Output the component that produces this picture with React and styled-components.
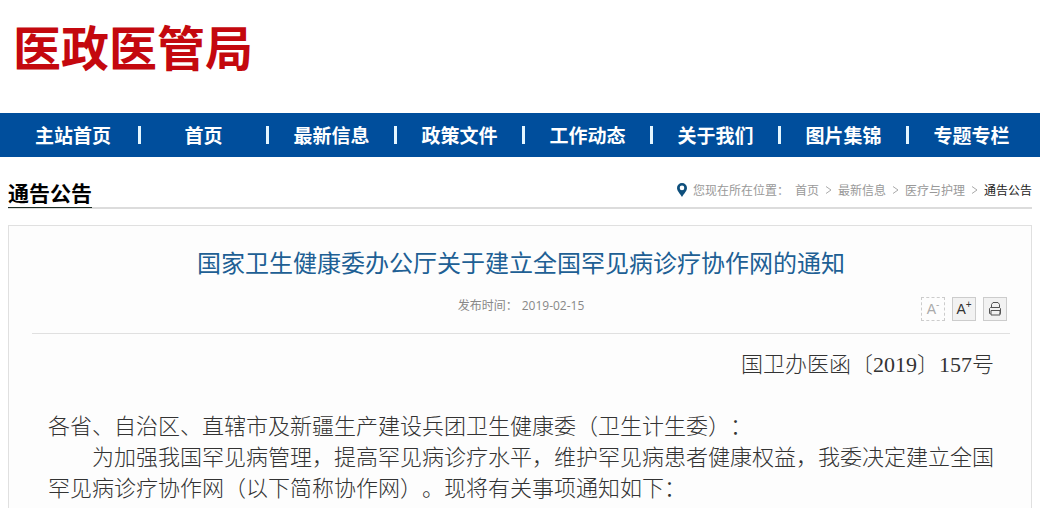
import React from "react";
import styled, { createGlobalStyle } from "styled-components";

const brandBlue = "#004e9c";

const navItems = ["主站首页", "首页", "最新信息", "政策文件", "工作动态", "关于我们", "图片集锦", "专题专栏"];
const crumbs = ["首页", "最新信息", "医疗与护理"];

function App() {
  return (
    <>
      <GlobalStyle />
      <Page lang="zh-CN">
        <Header>
          <Logo>医政医管局</Logo>
        </Header>
        <Navbar />
        <Container>
          <SectionBar>
            <SectionTitle>通告公告</SectionTitle>
            <Breadcrumbs />
          </SectionBar>
          <Article />
        </Container>
      </Page>
    </>
  );
}

export default App;

function Navbar() {
  return (
    <StyledNavbar>
      <NavList>
        {navItems.map((item) => (
          <NavItem key={item}>
            <NavLink href="#">{item}</NavLink>
          </NavItem>
        ))}
      </NavList>
    </StyledNavbar>
  );
}

function Breadcrumbs() {
  return (
    <StyledBreadcrumbs aria-label="位置">
      <PinIcon />
      <span>您现在所在位置：</span>
      {crumbs.map((crumb) => (
        <React.Fragment key={crumb}>
          <CrumbLink href="#">{crumb}</CrumbLink>
          <ChevronIcon />
        </React.Fragment>
      ))}
      <CurrentCrumb>通告公告</CurrentCrumb>
    </StyledBreadcrumbs>
  );
}

function Article() {
  return (
    <StyledArticle>
      <ArticleHead>
        <ArticleTitle>国家卫生健康委办公厅关于建立全国罕见病诊疗协作网的通知</ArticleTitle>
        <ArticleMeta>
          <PublishDate>
            <span>发布时间：</span>
            <time dateTime="2019-02-15">2019-02-15</time>
          </PublishDate>
          <Tools>
            <ToolButton aria-label="缩小字体" disabled>
              A<sup>-</sup>
            </ToolButton>
            <ToolButton aria-label="放大字体">
              A<sup>+</sup>
            </ToolButton>
            <ToolButton aria-label="打印">
              <PrintIcon />
            </ToolButton>
          </Tools>
        </ArticleMeta>
      </ArticleHead>
      <ArticleBody>
        <DocNumber>国卫办医函〔2019〕157号</DocNumber>
        <Paragraph>各省、自治区、直辖市及新疆生产建设兵团卫生健康委（卫生计生委）：</Paragraph>
        <Paragraph $indent>
          为加强我国罕见病管理，提高罕见病诊疗水平，维护罕见病患者健康权益，我委决定建立全国罕见病诊疗协作网（以下简称协作网）。现将有关事项通知如下：
        </Paragraph>
      </ArticleBody>
    </StyledArticle>
  );
}

function PinIcon() {
  return (
    <svg width="10" height="14" viewBox="0 0 10 14" aria-hidden="true">
      <path
        d="M5 0a5 5 0 0 0-5 5c0 3 3 5.500 5 9 2-3.500 5-6 5-9a5 5 0 0 0-5-5zm0 2.600a2.300 2.300 0 1 1 0 4.600 2.300 2.300 0 0 1 0-4.600z"
        fill="#0e4f7c"
        fillRule="evenodd"
      />
    </svg>
  );
}

function ChevronIcon() {
  return (
    <svg width="7" height="8" viewBox="0 0 7 8" fill="none" stroke="#aaa" aria-hidden="true">
      <path d="M1 .5 6 4 1 7.500" />
    </svg>
  );
}

function PrintIcon() {
  return (
    <svg width="14" height="14" viewBox="0 0 14 14" fill="none" stroke="#555" aria-hidden="true">
      <path d="M3.500 5.500v-3l1.500-2h5l1.500 2v3" />
      <path d="M2.500 11.500h-1v-5l1-1h9l1 1v5h-1" />
      <path d="M3 8.500h9v4.500h-9z" />
    </svg>
  );
}

const GlobalStyle = createGlobalStyle`
  * {
    box-sizing: border-box;
  }

  body {
    margin: 0;
    background: #fff;
    font-family: "Noto Sans CJK SC", sans-serif;
  }
`;

const Page = styled.div`
  min-height: 100vh;
  display: flex;
  flex-direction: column;
  text-spacing-trim: space-all;
`;

const Header = styled.header`
  padding: 14px 13px 35px;
`;

const Logo = styled.h1`
  margin: 0;
  color: #c4080e;
  font-size: 48px;
  line-height: 62px;
  font-weight: 700;
  padding-bottom: 2px;
`;

const StyledNavbar = styled.nav`
  background: ${brandBlue};
  padding: 0 6px 0 8px;
`;

const NavList = styled.ul`
  margin: 0;
  padding: 0;
  list-style: none;
  display: grid;
  grid-template-columns: 130fr repeat(7, 128fr);
  align-items: center;
  height: 44px;
`;

const NavItem = styled.li`
  height: 18px;
  display: flex;
  align-items: center;
  justify-content: center;

  & + & {
    border-left: 3px solid #e4f6ff;
  }
`;

const NavLink = styled.a`
  color: white;
  font-size: 19px;
  line-height: 20px;
  font-weight: 700;
  text-decoration: none;
  white-space: nowrap;
`;

const Container = styled.main`
  flex: 1;
  display: flex;
  flex-direction: column;
  padding: 24px 8px 0;
`;

const SectionBar = styled.div`
  display: flex;
  align-items: stretch;
  justify-content: space-between;
  border-bottom: 2px solid #dcdcdc;
  margin-bottom: 16px;
`;

const SectionTitle = styled.h2`
  margin: 0 0 -1px;
  padding-bottom: 4px;
  color: #000;
  font-size: 21px;
  line-height: 22px;
  font-weight: 700;
  border-bottom: 1px solid #1c2c24;
`;

const StyledBreadcrumbs = styled.nav`
  display: flex;
  align-items: center;
  align-self: flex-start;
  gap: 6px;
  color: #999;
  font-size: 12px;
  line-height: 18px;
`;

const CrumbLink = styled.a`
  color: #999;
  text-decoration: none;
`;

const CurrentCrumb = styled.span`
  color: #222;
`;

const StyledArticle = styled.article`
  flex: 1;
  background: #fdfdfd;
  border: 1px solid #e0e0e0;
  border-bottom: 0;
  padding: 18px 21px 0 23px;
`;

const ArticleHead = styled.header`
  border-bottom: 1px solid #e0e0e0;
  padding-bottom: 12px;
`;

const ArticleTitle = styled.h1`
  margin: 0;
  color: #205f94;
  font-size: 24px;
  line-height: 36px;
  font-weight: 400;
  text-align: center;
`;

const ArticleMeta = styled.div`
  display: grid;
  grid-template-columns: 1fr auto 1fr;
  align-items: start;
  padding-top: 17px;
`;

const PublishDate = styled.div`
  grid-column: 2;
  display: flex;
  gap: 4px;
  color: #888;
  font-family: "Open Sans", "Noto Sans CJK SC", sans-serif;
  font-size: 12px;
  line-height: 18px;
`;

const Tools = styled.div`
  display: flex;
  justify-content: flex-end;
  gap: 7px;
  padding: 0 3px;
`;

const ToolButton = styled.button`
  width: 24px;
  height: 24px;
  padding: 0;
  display: flex;
  align-items: center;
  justify-content: center;
  color: #333;
  background: #f2f2f2;
  border: 1px solid #ccc;
  font-family: "Liberation Sans", sans-serif;
  font-size: 14px;
  line-height: 14px;

  sup {
    align-self: flex-start;
    font-size: 10px;
    line-height: 14px;
  }

  &:disabled {
    color: #aaa;
    background: transparent;
    border-style: dashed;
  }
`;

const ArticleBody = styled.div`
  padding: 15px 16px 0;
  color: #333;
  font-family: "Liberation Serif", "Noto Sans CJK SC", serif;
  font-size: 22px;
  line-height: 31px;
  font-weight: 300;
`;

const DocNumber = styled.p`
  margin: 0 0 31px;
  text-align: right;
`;

const Paragraph = styled.p`
  margin: 0;
  text-indent: ${({ $indent }) => ($indent ? "2em" : 0)};
`;
